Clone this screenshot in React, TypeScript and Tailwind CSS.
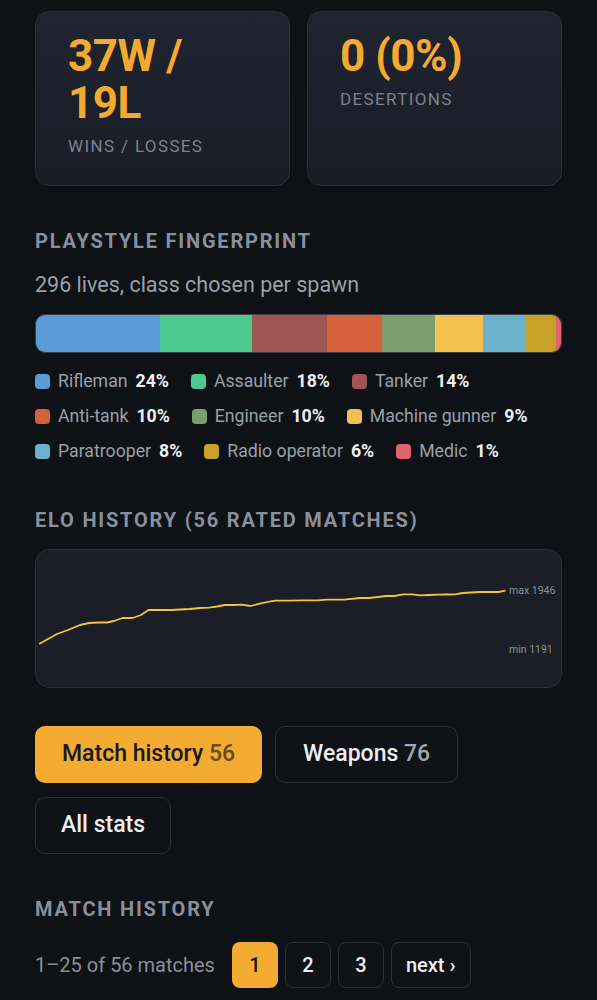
import type { ReactElement } from "react";

interface ClassShare {
  name: string;
  lives: number;
  color: string;
}

// Spawn counts per class, 296 lives total
const CLASSES: ClassShare[] = [
  { name: "Rifleman", lives: 70, color: "#5b9bd6" },
  { name: "Assaulter", lives: 52, color: "#4bc98f" },
  { name: "Tanker", lives: 42, color: "#a05555" },
  { name: "Anti-tank", lives: 31, color: "#d4613b" },
  { name: "Engineer", lives: 30, color: "#7c9e6f" },
  { name: "Machine gunner", lives: 27, color: "#f2c14f" },
  { name: "Paratrooper", lives: 24, color: "#6bb1c9" },
  { name: "Radio operator", lives: 17, color: "#c9a128" },
  { name: "Medic", lives: 3, color: "#e0636f" },
];

const TOTAL = CLASSES.reduce((s, c) => s + c.lives, 0);

// Elo line points, already in chart pixel space (525 x 137)
const ELO_POINTS: [number, number][] = [
  [3, 94], [12, 89], [21, 84], [32, 80], [44, 75], [53, 73], [62, 72.5], [71, 72.5],
  [78, 71], [86.5, 68], [96.5, 68], [105, 65], [112.5, 60], [124, 60], [135, 60],
  [145, 59.5], [154, 59], [164, 58], [173, 57.7], [181, 56.5], [189, 55], [198, 55],
  [206, 54.7], [214.5, 56], [224.8, 53.3], [238.8, 50.7], [253, 50.7], [267, 50.3],
  [282, 50.3], [291, 49.7], [300, 49.7], [308.5, 49.7], [323.7, 48], [333, 48],
  [342, 47], [350, 46], [358, 46], [367.5, 44.3], [376, 44.3], [384.6, 45.3],
  [393, 45], [401.7, 44.7], [410, 44.5], [419, 44.3], [426.5, 43], [435, 42.5],
  [443.6, 42], [452, 42], [462.7, 42], [469.5, 40.7],
];

function pct(lives: number): string {
  return `${Math.round((lives / TOTAL) * 100)}%`;
}

// Carte de stat en haut de page
function StatCard({ value, label }: { value: ReactElement | string; label: string }): ReactElement {
  return (
    <div className="rounded-[14px] border border-[#2a2e37] bg-gradient-to-b from-[#1f2430] to-[#1a1d25] px-[32px] pb-[27px] pt-[21px]">
      <div className="text-[44px] font-bold leading-[47px] tracking-[-0.01em] text-[#f3aa2f]">{value}</div>
      <div className="mt-[7px] text-[17px] leading-[24px] tracking-[0.08em] text-[#7c828e]">{label}</div>
    </div>
  );
}

function SectionTitle({ children, className }: { children: string; className: string }): ReactElement {
  return (
    <h2 className={`text-[20px] font-bold uppercase leading-[24px] tracking-[0.09em] text-[#8a909b] ${className}`}>
      {children}
    </h2>
  );
}

export default function App(): ReactElement {
  const line = ELO_POINTS.map(([x, y]) => `${x},${y}`).join(" ");

  return (
    <div className="min-h-screen bg-[#0e1116] px-[35px] pb-[20px] pt-[11px] font-['Roboto',sans-serif]">
      {/* Bilan victoires / desertions */}
      <div className="grid grid-cols-2 gap-[17px]">
        <StatCard value={<>37W /<br />19L</>} label="WINS / LOSSES" />
        <StatCard value="0 (0%)" label="DESERTIONS" />
      </div>

      {/* Repartition des classes */}
      <SectionTitle className="mt-[43px]">Playstyle fingerprint</SectionTitle>
      <p className="mt-[19px] text-[21.5px] leading-[26px] text-[#9aa0a9]">296 lives, class chosen per spawn</p>
      <div className="mt-[16px] flex h-[39px] overflow-hidden rounded-[10px] border border-[#3a3f48]">
        {CLASSES.map((c) => (
          <div key={c.name} style={{ width: `${(c.lives / TOTAL) * 100}%`, backgroundColor: c.color }} />
        ))}
      </div>
      <div className="mt-[16px] flex flex-wrap gap-x-[22px] gap-y-[11px]">
        {CLASSES.map((c) => (
          <div key={c.name} className="flex h-[24px] items-center">
            <span className="h-[15px] w-[15px] rounded-[4px]" style={{ backgroundColor: c.color }} />
            <span className="ml-[8px] text-[17.7px] text-[#9aa0a9]">{c.name}</span>
            <span className="ml-[8px] text-[17.7px] font-bold text-[#eef0f3]">{pct(c.lives)}</span>
          </div>
        ))}
      </div>

      {/* Courbe Elo */}
      <SectionTitle className="mt-[45px]">Elo history (56 rated matches)</SectionTitle>
      <div className="mt-[17px] h-[139px] rounded-[14px] border border-[#2a2e37] bg-[#1b1e26]">
        <svg viewBox="0 0 525 137" className="h-full w-full">
          <polyline points={line} fill="none" stroke="#f3c23e" strokeWidth={1.8} strokeLinejoin="round" />
          <text x={473} y={44} fontSize={10.5} fill="#8c919a" fontFamily="Roboto, sans-serif">max 1946</text>
          <text x={473} y={103} fontSize={10.5} fill="#8c919a" fontFamily="Roboto, sans-serif">min 1191</text>
        </svg>
      </div>

      {/* Onglets */}
      <div className="mt-[38px] flex flex-wrap gap-x-[13px] gap-y-[14px]">
        <button type="button" className="h-[57px] rounded-[10px] bg-[#f3ab32] px-[27px] text-[23px] font-medium text-[#16181c]">
          Match history <span className="text-[#6b4b16]">56</span>
        </button>
        <button type="button" className="h-[57px] rounded-[10px] border border-[#2a2e37] bg-[#0f1217] px-[27px] text-[23px] font-medium text-[#eceef1]">
          Weapons <span className="text-[#a2a7af]">76</span>
        </button>
        <button type="button" className="h-[57px] rounded-[10px] border border-[#2a2e37] bg-[#0f1217] px-[25px] text-[23px] font-medium text-[#eceef1]">
          All stats
        </button>
      </div>

      {/* Historique des matchs */}
      <SectionTitle className="mt-[43px]">Match history</SectionTitle>
      <div className="mt-[21px] flex items-center">
        <span className="mr-[17px] text-[20px] text-[#8a9099]">1–25 of 56 matches</span>
        <div className="flex gap-[7px]">
          <button type="button" className="h-[46px] w-[46px] rounded-[8px] bg-[#f3ab32] text-[20px] font-medium text-[#16181c]">1</button>
          <button type="button" className="h-[46px] w-[46px] rounded-[8px] border border-[#2a2e37] bg-[#0f1217] text-[20px] font-medium text-[#eceef1]">2</button>
          <button type="button" className="h-[46px] w-[46px] rounded-[8px] border border-[#2a2e37] bg-[#0f1217] text-[20px] font-medium text-[#eceef1]">3</button>
          <button type="button" className="h-[46px] rounded-[8px] border border-[#2a2e37] bg-[#0f1217] px-[14px] text-[20px] font-medium text-[#eceef1]">next ›</button>
        </div>
      </div>
    </div>
  );
}
